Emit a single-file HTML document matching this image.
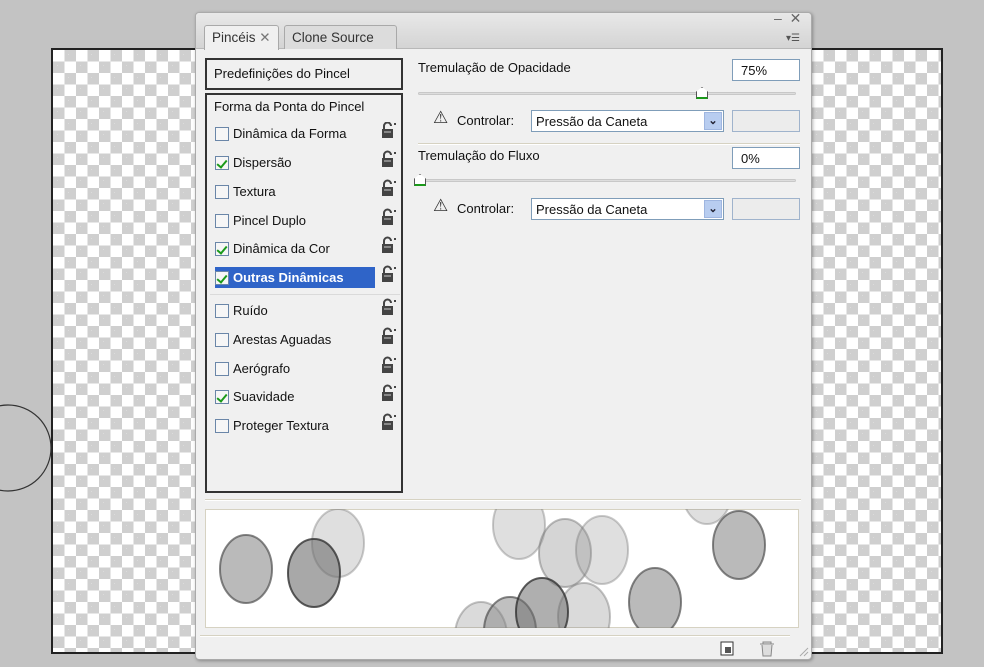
<!DOCTYPE html>
<html><head><meta charset="utf-8"><style>
*{margin:0;padding:0;box-sizing:border-box}
body{width:984px;height:667px;background:#c3c3c3;position:relative;overflow:hidden;font-family:"Liberation Sans",sans-serif;font-size:13px;color:#111}
.abs{position:absolute}
#canvas{left:51px;top:48px;width:892px;height:606px;border:2px solid #222;
background-color:#fff;background-image:linear-gradient(45deg,#cfcfcf 25%,transparent 25%,transparent 75%,#cfcfcf 75%),linear-gradient(45deg,#cfcfcf 25%,transparent 25%,transparent 75%,#cfcfcf 75%);background-size:23px 23px;background-position:0 0,11.5px 11.5px}
#panel{left:195px;top:12px;width:617px;height:648px;background:#f0f0f0;border:1px solid #aaa;border-radius:4px;box-shadow:1px 1px 3px rgba(0,0,0,.3)}
.tabbar{left:0;top:0;width:615px;height:36px;background:linear-gradient(#e8e8e8,#d4d4d4);border-radius:4px 4px 0 0;border-bottom:1px solid #b8b8b8}
.tab{top:12px;height:24px;border:1px solid #a9a9a9;border-bottom:none;border-radius:3px 3px 0 0;padding:4px 7px 0;font-size:14px;color:#333}
.list{left:9px;border:2px solid #333;background:#f0f0f0}
.item{position:absolute;left:8px;height:20px;line-height:20px;font-size:13px}
.cb{position:absolute;left:0;top:3px;width:14px;height:14px;border:1px solid #6a86a8;background:#f6f6f6}
.cb.on::after{content:"";position:absolute;left:3px;top:1px;width:4px;height:8px;border:solid #1a9a1a;border-width:0 2px 2px 0;transform:rotate(40deg)}
.item span{position:absolute;left:18px;white-space:nowrap}
.row{position:absolute;left:3px;width:190px;height:1px;background:#fff;border-top:1px solid #dadada}
.inp{background:#fff;border:1px solid #7f9db9;height:22px;padding:3px 8px;font-size:13px}
.sel{background:#fff;border:1px solid #7f9db9;height:22px;padding:3px 4px;font-size:13px;width:193px}
.sel b{position:absolute;right:1px;top:1px;width:18px;height:18px;background:#b8cdf0;border:1px solid #9fb6e0;font-size:11px;color:#223;text-align:center;line-height:16px;font-weight:bold}
.track{height:3px;background:#ddd;border:1px solid #c8c8c8;border-radius:2px}
.thumb{width:12px;height:12px;border:1px solid #555;border-bottom:2px solid #1a9a1a;background:#fff;clip-path:polygon(50% 0,100% 40%,100% 100%,0 100%,0 40%)}
.warn{font-size:17px;color:#333}
.hline{height:2px;background:#d6d2c2;border-bottom:1px solid #fff}
</style></head><body>
<div id="canvas" class="abs"></div>
<svg class="abs" style="left:0;top:400px" width="60" height="100"><circle cx="8" cy="48" r="43" fill="none" stroke="#333" stroke-width="1.2"/></svg>
<div id="panel" class="abs">
 <div class="abs tabbar"></div>
 <div class="abs" style="left:578px;top:-3px;font-size:14px;color:#666">–&nbsp;&nbsp;✕</div>
 <div class="abs" style="left:590px;top:20px;font-size:10px;color:#555">▾☰</div>
 <div class="abs tab" style="left:8px;background:#f0f0f0;height:25px;font-size:13.5px">Pincéis <span style="color:#777">✕</span></div>
 <div class="abs tab" style="left:88px;background:#dcdcdc;font-size:13.5px;width:113px">Clone Source</div>

 <div class="abs list" style="top:45px;width:198px;height:32px;padding:6px 7px;font-size:13px">Predefinições do Pincel</div>
 <div class="abs list" style="top:80px;width:198px;height:400px">
  <div class="abs" style="left:7px;top:4px">Forma da Ponta do Pincel</div>
 </div>
 <div class="abs" style="left:11px;top:80px;width:194px;height:396px">
  <div class="item" style="top:31px"><i class="cb"></i><span>Dinâmica da Forma</span></div>
  <div class="item" style="top:60px"><i class="cb on"></i><span>Dispersão</span></div>
  <div class="item" style="top:89px"><i class="cb"></i><span>Textura</span></div>
  <div class="item" style="top:118px"><i class="cb"></i><span>Pincel Duplo</span></div>
  <div class="item" style="top:146px"><i class="cb on"></i><span>Dinâmica da Cor</span></div>
  <div class="abs" style="left:8px;top:174px;width:160px;height:21px;background:#2f64c8"></div>
  <div class="item" style="top:175px"><i class="cb on"></i><span style="color:#fff;font-weight:bold">Outras Dinâmicas</span></div>
  <div class="row" style="top:201px"></div>
  <div class="item" style="top:208px"><i class="cb"></i><span>Ruído</span></div>
  <div class="item" style="top:237px"><i class="cb"></i><span>Arestas Aguadas</span></div>
  <div class="item" style="top:266px"><i class="cb"></i><span>Aerógrafo</span></div>
  <div class="item" style="top:294px"><i class="cb on"></i><span>Suavidade</span></div>
  <div class="item" style="top:323px"><i class="cb"></i><span>Proteger Textura</span></div>
 </div>

 <div class="abs" style="left:222px;top:47px">Tremulação de Opacidade</div>
 <div class="abs inp" style="left:536px;top:46px;width:68px">75%</div>
 <div class="abs track" style="left:222px;top:79px;width:378px"></div>
 <div class="abs thumb" style="left:500px;top:74px"></div>
 <div class="abs warn" style="left:237px;top:95px">⚠</div>
 <div class="abs" style="left:261px;top:100px">Controlar:</div>
 <div class="abs sel" style="left:335px;top:97px">Pressão da Caneta<b>⌄</b></div>
 <div class="abs" style="left:536px;top:97px;width:68px;height:22px;border:1px solid #9fb3cc;background:#ececec"></div>
 <div class="abs hline" style="left:222px;top:130px;width:382px"></div>
 <div class="abs" style="left:222px;top:135px">Tremulação do Fluxo</div>
 <div class="abs inp" style="left:536px;top:134px;width:68px">0%</div>
 <div class="abs track" style="left:222px;top:166px;width:378px"></div>
 <div class="abs thumb" style="left:218px;top:161px"></div>
 <div class="abs warn" style="left:237px;top:183px">⚠</div>
 <div class="abs" style="left:261px;top:188px">Controlar:</div>
 <div class="abs sel" style="left:335px;top:185px">Pressão da Caneta<b>⌄</b></div>
 <div class="abs" style="left:536px;top:185px;width:68px;height:22px;border:1px solid #9fb3cc;background:#ececec"></div>

 <div class="abs hline" style="left:9px;top:486px;width:596px"></div>
 <svg class="abs" style="left:9px;top:496px" width="594" height="119">
  <rect x="0" y="0" width="594" height="119" fill="#fff" stroke="#d6d2c2" stroke-width="2"/>
  <g stroke-width="2">
   <ellipse cx="502" cy="-19" rx="25" ry="34" fill="rgba(150,150,150,.3)" stroke="rgba(120,120,120,.4)"/>
   <ellipse cx="133" cy="34" rx="26" ry="34" fill="rgba(150,150,150,.3)" stroke="rgba(120,120,120,.4)"/>
   <ellipse cx="314" cy="16" rx="26" ry="34" fill="rgba(150,150,150,.3)" stroke="rgba(120,120,120,.4)"/>
   <ellipse cx="41" cy="60" rx="26" ry="34" fill="rgba(130,130,130,.55)" stroke="rgba(80,80,80,.7)"/>
   <ellipse cx="109" cy="64" rx="26" ry="34" fill="rgba(110,110,110,.6)" stroke="rgba(50,50,50,.8)"/>
   <ellipse cx="360" cy="44" rx="26" ry="34" fill="rgba(150,150,150,.4)" stroke="rgba(120,120,120,.5)"/>
   <ellipse cx="397" cy="41" rx="26" ry="34" fill="rgba(150,150,150,.3)" stroke="rgba(120,120,120,.4)"/>
   <ellipse cx="534" cy="36" rx="26" ry="34" fill="rgba(130,130,130,.55)" stroke="rgba(80,80,80,.7)"/>
   <ellipse cx="450" cy="93" rx="26" ry="34" fill="rgba(130,130,130,.55)" stroke="rgba(80,80,80,.7)"/>
   <ellipse cx="379" cy="108" rx="26" ry="34" fill="rgba(150,150,150,.35)" stroke="rgba(120,120,120,.45)"/>
   <ellipse cx="276" cy="127" rx="26" ry="34" fill="rgba(150,150,150,.35)" stroke="rgba(120,120,120,.45)"/>
   <ellipse cx="305" cy="122" rx="26" ry="34" fill="rgba(130,130,130,.5)" stroke="rgba(80,80,80,.7)"/>
   <ellipse cx="337" cy="103" rx="26" ry="34" fill="rgba(110,110,110,.55)" stroke="rgba(50,50,50,.8)"/>
  </g>
 </svg>
 <div class="abs hline" style="left:4px;top:622px;width:590px"></div>
 <svg class="abs" style="left:524px;top:627px" width="90" height="18">
  <rect x="1" y="2" width="12" height="13" fill="#fff" stroke="#333"/><rect x="5" y="7" width="6" height="6" fill="#555"/>
  <path d="M40 4h14M43 4v-2h8v2M42 5l1 11h8l1-11" fill="#ddd" stroke="#888"/>
  <path d="M80 16l8-8M84 16l4-4" stroke="#aaa"/>
 </svg>
</div>
<svg class="abs" style="left:380px;top:122px" width="20" height="320">
 <defs><g id="lk"><rect x="2" y="7" width="11" height="9" fill="#444"/><rect x="4" y="9" width="7" height="2" fill="#888"/><path d="M4 7V4a3.5 3.5 0 0 1 7 0" fill="none" stroke="#444" stroke-width="2"/><rect x="14" y="1" width="2" height="2" fill="#444"/></g></defs>
 <use href="#lk"/><use href="#lk" y="29"/><use href="#lk" y="58"/><use href="#lk" y="87"/><use href="#lk" y="115"/><use href="#lk" y="144"/><use href="#lk" y="177"/><use href="#lk" y="206"/><use href="#lk" y="235"/><use href="#lk" y="263"/><use href="#lk" y="292"/>
</svg>
</body></html>
